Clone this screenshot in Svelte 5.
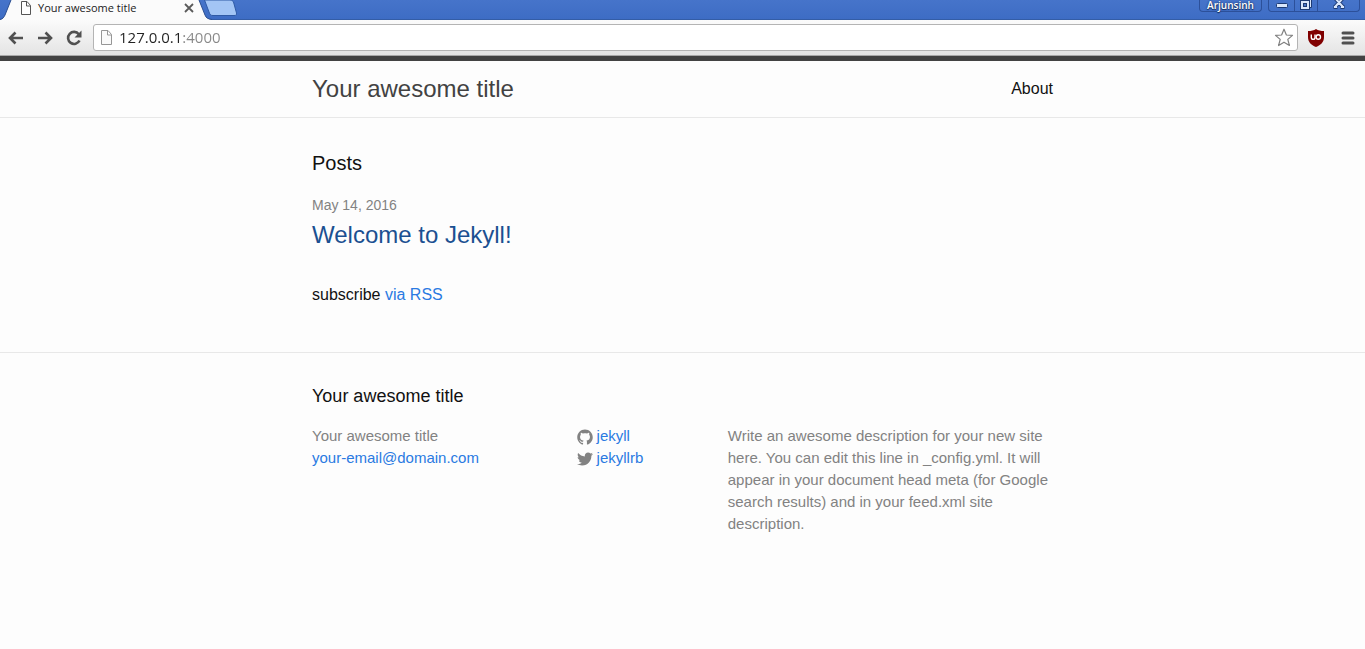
<script>
  const site = 'Your awesome title';
  let address = $state('127.0.0.1:4000');
  const posts = [{ date: 'May 14, 2016', title: 'Welcome to Jekyll!' }];
</script>

<div class="window">
  <div class="strip">
    <div class="tab">
      <svg class="tab-shape" width="212" height="20" viewBox="0 0 212 20" aria-hidden="true">
        <path d="M0 20C3 19 4 17 5 15L11 0H199L205 15C206 18 208 19 212 20Z" fill="#fbfbfb" />
        <path d="M0 19.500C3 19 4 17 5 15L11 0M199 0L205 15C206 18 208 19 212 19.500" fill="none" stroke="#2c4f91" />
      </svg>
      <svg class="tab-page" width="12" height="15" viewBox="0 0 12 15" aria-hidden="true">
        <path d="M1.500 .500H7L10.500 4.500V13.500H1.500ZM6.500 .500V5H10.500" fill="#fff" stroke="#555" />
      </svg>
      <span class="tab-title">{site}</span>
      <button class="tab-close" aria-label="Close tab">
        <svg width="10" height="10" viewBox="0 0 10 10"><path d="M1 1L9 9M9 1L1 9" stroke="#5a5a5a" stroke-width="1.800" /></svg>
      </button>
    </div>
    <button class="new-tab" aria-label="New tab">
      <svg width="33" height="17" viewBox="0 0 33 17">
        <path d="M.500 0H26C28 0 29 1 29.500 2L32.500 13C33 15 32 15.500 30 15.500H9C7 15.500 6 15 5 12Z" fill="#a3c5f5" stroke="#2f5aa5" />
      </svg>
    </button>
    <div class="caption">
      <button class="user">Arjunsinh</button>
      <div class="controls">
        <button class="min" aria-label="Minimize">
          <svg width="14" height="12" viewBox="0 0 14 12"><rect x="1.500" y="3.500" width="11" height="4" rx="1" fill="#d9e6fb" stroke="#1d3a73" /></svg>
        </button>
        <button class="max" aria-label="Restore">
          <svg width="14" height="12" viewBox="0 0 14 12">
            <path d="M4.500 0V-1H12.500V7.500H10" fill="#d9e6fb" stroke="#1d3a73" />
            <rect x="1.500" y=".500" width="9" height="9" fill="#d9e6fb" stroke="#1d3a73" />
            <rect x="4.500" y="3.500" width="3" height="3" fill="#4674c8" stroke="#1d3a73" />
          </svg>
        </button>
        <button class="close" aria-label="Close window">
          <svg width="14" height="12" viewBox="0 0 14 12">
            <path d="M3 -2L11 7M11 -2L3 7M1.500 7H5.500M8.500 7H12.500" stroke="#1d3a73" stroke-width="4" />
            <path d="M3 -2L11 7M11 -2L3 7M2 7H5M9 7H12" stroke="#d9e6fb" stroke-width="2" />
          </svg>
        </button>
      </div>
    </div>
  </div>

  <div class="toolbar">
    <button class="tool" aria-label="Back">
      <svg width="16" height="14" viewBox="0 0 16 14"><path d="M15 7H2.500M7.500 1.500L2 7L7.500 12.500" fill="none" stroke="#505050" stroke-width="2.600" /></svg>
    </button>
    <button class="tool" aria-label="Forward">
      <svg width="16" height="14" viewBox="0 0 16 14"><path d="M1 7H13.500M8.500 1.500L14 7L8.500 12.500" fill="none" stroke="#505050" stroke-width="2.600" /></svg>
    </button>
    <button class="tool" aria-label="Reload">
      <svg width="16" height="16" viewBox="0 0 16 16">
        <path d="M12.800 4.200A6 6 0 1 0 13.500 10.500" fill="none" stroke="#505050" stroke-width="2.600" />
        <path d="M15.500 .500V7.500H8.500Z" fill="#505050" />
      </svg>
    </button>
    <div class="omnibox">
      <svg width="13" height="16" viewBox="0 0 13 16" aria-hidden="true">
        <path d="M1.500 .500H8L11.500 4.500V14.500H1.500ZM7.500 .500V5H11.500" fill="#fafafa" stroke="#969696" />
      </svg>
      <input aria-label="Address" bind:value={address} spellcheck="false" />
      <button class="star" aria-label="Bookmark">
        <svg width="20" height="19" viewBox="0 0 20 19">
          <path d="M10 1.200L12.400 7L18.500 7.400L13.800 11.400L15.400 17.500L10 14.200L4.600 17.500L6.200 11.400L1.500 7.400L7.600 7Z" fill="#fff" stroke="#808080" stroke-width="1.200" stroke-linejoin="round" />
        </svg>
      </button>
    </div>
    <button class="shield" aria-label="Blocker">
      <svg width="18" height="20" viewBox="0 0 18 20">
        <path d="M9 1C11 2.500 14 3 17 3V9C17 14 14 17 9 19C4 17 1 14 1 9V3C4 3 7 2.500 9 1Z" fill="#800000" />
        <path d="M4.300 6.500V9.500A1.800 1.800 0 0 0 8 9.500V6.500" fill="none" stroke="#fff" stroke-width="1.400" />
        <circle cx="11.300" cy="9" r="2.200" fill="none" stroke="#fff" stroke-width="1.400" />
      </svg>
    </button>
    <button class="menu" aria-label="Menu">
      <svg width="14" height="14" viewBox="0 0 14 14"><path d="M2 2H12M2 7H12M2 12H12" stroke="#505050" stroke-width="3" stroke-linecap="round" /></svg>
    </button>
  </div>
</div>

<header>
  <div class="wrapper masthead">
    <a class="site-title" href="#home">{site}</a>
    <nav><a href="#about">About</a></nav>
  </div>
</header>

<main>
  <div class="wrapper">
    <h1>Posts</h1>
    <ul class="posts">
      {#each posts as post}
        <li>
          <time>{post.date}</time>
          <h2><a href="#post">{post.title}</a></h2>
        </li>
      {/each}
    </ul>
    <p class="subscribe">subscribe <a href="#feed">via RSS</a></p>
  </div>
</main>

<footer>
  <div class="wrapper">
    <h2>{site}</h2>
    <div class="columns">
      <ul>
        <li>{site}</li>
        <li><a href="#mail">your-email@domain.com</a></li>
      </ul>
      <ul>
        <li>
          <a class="social" href="#github">
            <svg width="16" height="17" viewBox="0 -1 16 17" aria-hidden="true"><path fill="#828282" d="M7.999,0.431c-4.285,0-7.76,3.474-7.76,7.761 c0,3.428,2.223,6.337,5.307,7.363c0.388,0.071,0.53-0.168,0.53-0.374c0-0.184-0.007-0.672-0.01-1.32 c-2.159,0.469-2.614-1.04-2.614-1.04c-0.353-0.896-0.862-1.135-0.862-1.135c-0.705-0.481,0.053-0.472,0.053-0.472 c0.779,0.055,1.189,0.8,1.189,0.8c0.692,1.186,1.816,0.843,2.258,0.645c0.071-0.502,0.271-0.843,0.493-1.037 C4.86,11.425,3.049,10.76,3.049,7.786c0-0.847,0.302-1.54,0.799-2.082C3.768,5.507,3.501,4.718,3.924,3.65 c0,0,0.652-0.209,2.134,0.796C6.677,4.273,7.34,4.187,8,4.184c0.659,0.003,1.323,0.089,1.943,0.261 c1.482-1.004,2.132-0.796,2.132-0.796c0.423,1.068,0.157,1.857,0.077,2.054c0.497,0.542,0.798,1.235,0.798,2.082 c0,2.981-1.814,3.637-3.543,3.829c0.279,0.24,0.527,0.713,0.527,1.437c0,1.037-0.01,1.874-0.01,2.129 c0,0.208,0.14,0.449,0.534,0.373c3.081-1.028,5.302-3.935,5.302-7.362C15.76,3.906,12.285,0.431,7.999,0.431z" /></svg>
            <span>jekyll</span>
          </a>
        </li>
        <li>
          <a class="social" href="#twitter">
            <svg width="16" height="17" viewBox="0 -1 16 17" aria-hidden="true"><path fill="#828282" d="M15.969,3.058c-0.586,0.26-1.217,0.436-1.878,0.515c0.675-0.405,1.194-1.045,1.438-1.809c-0.632,0.375-1.332,0.647-2.076,0.793c-0.596-0.636-1.446-1.033-2.387-1.033c-1.806,0-3.27,1.464-3.27,3.27 c0,0.256,0.029,0.506,0.085,0.745C5.163,5.404,2.753,4.102,1.14,2.124C0.859,2.607,0.698,3.168,0.698,3.767 c0,1.134,0.577,2.135,1.455,2.722C1.616,6.472,1.112,6.325,0.671,6.08c0,0.014,0,0.027,0,0.041c0,1.584,1.127,2.906,2.623,3.206 C3.02,9.402,2.731,9.442,2.433,9.442c-0.211,0-0.416-0.021-0.615-0.059c0.416,1.299,1.624,2.245,3.055,2.271 c-1.119,0.877-2.529,1.4-4.061,1.4c-0.264,0-0.524-0.015-0.78-0.046c1.447,0.928,3.166,1.469,5.013,1.469 c6.015,0,9.304-4.983,9.304-9.304c0-0.142-0.003-0.283-0.009-0.423C14.976,4.29,15.531,3.714,15.969,3.058z" /></svg>
            <span>jekyllrb</span>
          </a>
        </li>
      </ul>
      <p>Write an awesome description for your new site here. You can edit this line in _config.yml. It will appear in your document head meta (for Google search results) and in your feed.xml site description.</p>
    </div>
  </div>
</footer>

<style>
  :global(body) {
    background: #fdfdfd;
    color: #111;
    font: 16px/24px "Liberation Sans", Arial, sans-serif;
  }
  h1, h2, p, ul { margin: 0; padding: 0; font-weight: 400; }
  ul { list-style: none; }
  a { color: #2a7ae2; text-decoration: none; }
  svg { display: block; flex: none; }
  button { padding: 0; border: 0; background: none; font: inherit; display: flex; align-items: center; justify-content: center; }

  .window { font-family: "Open Sans", "Noto Sans", sans-serif; }
  .strip {
    display: flex;
    align-items: flex-start;
    height: 20px;
    background: linear-gradient(#4674ca, #3d6cc4);
    box-shadow: inset 0 -1px #345da6;
  }
  .tab { position: relative; display: flex; align-items: center; width: 204px; height: 16px; padding-left: 20px; box-sizing: border-box; }
  .tab-shape { position: absolute; left: 0; top: 0; }
  .tab-page, .tab-title, .tab-close { position: relative; }
  .tab-title { flex: 1; margin-left: 6px; font-size: 11px; line-height: 16px; color: #222; }
  .tab-close { width: 10px; margin-right: 10px; }
  .new-tab { position: relative; }
  .caption { display: flex; gap: 6px; margin-left: auto; padding-right: 5px; }
  .user {
    width: 63px;
    height: 12px;
    box-sizing: border-box;
    border: 1px solid #2c509a;
    border-top: 0;
    border-radius: 0 0 4px 4px;
    color: #fff;
    font-size: 10px;
    font-weight: 600;
    line-height: 10px;
    padding-bottom: 1px;
    text-shadow: 0 0 2px #122a5a, 0 1px 1px #122a5a;
  }
  .controls { display: flex; height: 12px; box-sizing: border-box; border: 1px solid #2c509a; border-top: 0; border-radius: 0 0 4px 4px; overflow: hidden; }
  .controls svg { overflow: visible; }
  .min { width: 25px; }
  .max { width: 24px; border: solid #2c509a; border-width: 0 1px; }
  .close { width: 41px; }

  .toolbar {
    display: flex;
    align-items: center;
    height: 36px;
    box-sizing: border-box;
    padding: 0 10px 0 8px;
    background: linear-gradient(#fbfbfb, #e4e4e4);
    border-bottom: 1px solid #a8a8a8;
  }
  .tool { width: 16px; margin-right: 13px; }
  .omnibox {
    display: flex;
    flex: 1;
    align-items: center;
    height: 27px;
    box-sizing: border-box;
    margin-left: -2px;
    padding: 0 3px 0 6px;
    border: 1px solid #b4b4b4;
    border-radius: 3px;
    background: #fff;
  }
  input {
    flex: 1;
    min-width: 0;
    height: 24px;
    box-sizing: border-box;
    margin-left: 6px;
    padding: 0 0 2px;
    border: 0;
    outline: 0;
    font: 15px/22px "Open Sans", "Noto Sans", sans-serif;
    background: linear-gradient(90deg, #222 62px, #888 62px);
    -webkit-background-clip: text;
    background-clip: text;
    color: transparent;
    caret-color: #222;
  }
  .shield { margin: 0 16px 0 9px; }

  header { border-top: 5px solid #424242; border-bottom: 1px solid #e8e8e8; }
  .wrapper { max-width: 741px; margin: 0 auto; padding: 0 30px; }
  .masthead { display: flex; justify-content: space-between; line-height: 56px; }
  .site-title { font-size: 24px; color: #424242; }
  nav a { color: #111; }

  main { padding: 30px 0 45px; }
  h1 { font-size: 20px; line-height: 30px; margin-bottom: 15px; }
  time { display: block; font-size: 14px; color: #828282; }
  .posts h2 { font-size: 24px; line-height: 36px; }
  .posts a { color: #1b5091; }
  .posts li { margin-bottom: 30px; }

  footer { padding: 30px 0; border-top: 1px solid #e8e8e8; }
  footer h2 { font-size: 18px; line-height: 27px; margin-bottom: 15px; }
  .columns {
    display: grid;
    grid-template-columns: 35% 20% 45%;
    margin-left: -15px;
    font-size: 15px;
    line-height: 22px;
    color: #828282;
  }
  .columns > * { padding-left: 15px; }
  .social { display: flex; align-items: center; gap: 4px; }
</style>
